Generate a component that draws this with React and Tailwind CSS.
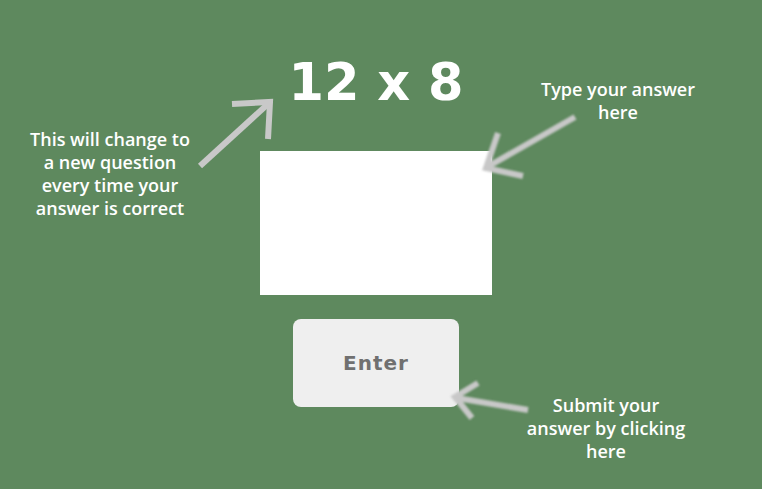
const note = "text-center text-white text-[18px] leading-[23px] font-semibold [font-family:'Open_Sans',sans-serif]";

export default function App() {
  return (
    <div className="relative w-[762px] h-[489px] bg-[#5e895e] overflow-hidden flex">
      {/* left note */}
      <div className="w-[260px] pt-[128px] pl-[10px]">
        <p className={`${note} w-[200px]`}>
          This will change to<br />a new question<br />every time your<br />answer is correct
        </p>
      </div>

      {/* center column */}
      <div className="w-[232px] flex flex-col items-center pt-[53px]">
        <h1 className="text-white text-[51px] leading-[60px] font-bold whitespace-nowrap [font-family:'DejaVu_Sans',sans-serif]">12 x 8</h1>
        <input type="text" className="mt-[38px] w-[232px] h-[144px] bg-white outline-none" />
        <button className="mt-[24px] w-[166px] h-[88px] rounded-lg bg-[#efefef] text-[#707070] text-[20px] font-bold tracking-[1px] [font-family:'DejaVu_Sans',sans-serif]">
          Enter
        </button>
      </div>

      {/* right notes */}
      <div className="flex-1 flex flex-col pt-[78px]">
        <p className={`${note} w-[200px] ml-[26px]`}>
          Type your answer<br />here
        </p>
        <p className={`${note} w-[200px] ml-[14px] mt-[270px]`}>
          Submit your<br />answer by clicking<br />here
        </p>
      </div>

      {/* arrows */}
      <svg className="absolute inset-0 pointer-events-none" width="762" height="489" viewBox="0 0 762 489">
        <g stroke="#c8c8c8" strokeWidth="6" fill="none" strokeLinecap="butt" strokeLinejoin="miter">
          <path d="M200 166 L269 103" />
          <path d="M232 104 L270 102 L268 139" />
        </g>
        <g stroke="#c8c8c8" strokeWidth="6" fill="none" style={{ filter: "blur(0.8px)" }}>
          <path d="M575 117 L489 166" />
          <path d="M498 133 L486 168 L523 176" />
          <path d="M528 410 L457 398" />
          <path d="M478 383 L455 397 L472 418" />
        </g>
      </svg>
    </div>
  );
}
